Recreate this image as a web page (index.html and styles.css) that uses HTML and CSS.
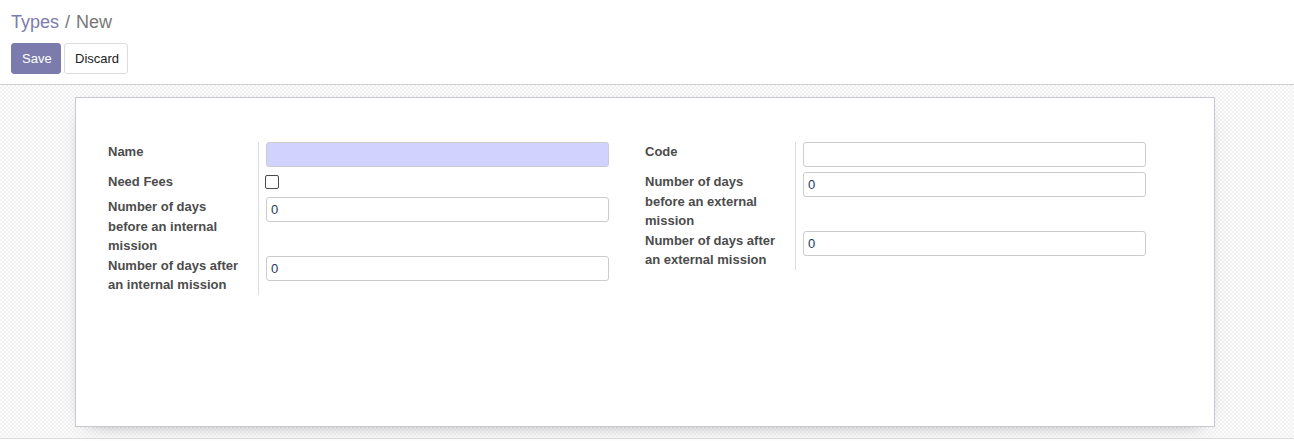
FILE: index.html
```html
<!DOCTYPE html>
<html>
<head>
<meta charset="utf-8">
<link rel="stylesheet" href="styles.css">
</head>
<body>
<div class="control-panel">
  <div class="breadcrumb"><a class="crumb-link">Types</a><span class="crumb-sep">/</span><span class="crumb-active">New</span></div>
  <div class="buttons">
    <button class="btn btn-primary">Save</button>
    <button class="btn btn-secondary">Discard</button>
  </div>
</div>
<div class="content">
  <div class="sheet">
    <div class="groups">
      <div class="group">
        <label class="label">Name</label>
        <div class="field"><input class="input required" type="text" value=""></div>
        <label class="label">Need Fees</label>
        <div class="field field-check"><span class="checkbox"></span></div>
        <label class="label">Number of days before an internal mission</label>
        <div class="field"><input class="input" type="text" value="0"></div>
        <label class="label">Number of days after an internal mission</label>
        <div class="field"><input class="input" type="text" value="0"></div>
      </div>
      <div class="group">
        <label class="label">Code</label>
        <div class="field"><input class="input" type="text" value=""></div>
        <label class="label">Number of days before an external mission</label>
        <div class="field"><input class="input" type="text" value="0"></div>
        <label class="label">Number of days after an external mission</label>
        <div class="field"><input class="input" type="text" value="0"></div>
      </div>
    </div>
  </div>
</div>
</body>
</html>
```
FILE: styles.css
```css
* { box-sizing: border-box; }
html, body { margin: 0; padding: 0; background: #fff; }
body {
  font-family: "Liberation Sans", Arial, sans-serif;
  font-size: 13px;
  color: #4c4c4c;
  width: 1294px;
  height: 441px;
  overflow: hidden;
}
.control-panel {
  height: 85px;
  border-bottom: 1px solid #cfcfcf;
  padding: 11px 0 0 11px;
}
.breadcrumb {
  font-size: 18px;
  line-height: 22px;
  height: 22px;
  color: #777;
}
.crumb-link { color: #7c7bad; }
.crumb-sep { margin: 0 6px; }
.buttons {
  display: flex;
  gap: 3px;
  margin-top: 10px;
}
.btn {
  font-family: "Liberation Sans", Arial, sans-serif;
  font-size: 13px;
  height: 31px;
  padding: 0 10px;
  border-radius: 3px;
  border: 1px solid #7c7bad;
  cursor: pointer;
}
.btn-primary {
  background: #7c7bad;
  color: #fff;
  width: 50px;
}
.btn-secondary {
  background: #fff;
  color: #222;
  border-color: #ddd;
  width: 64px;
}
.content {
  height: 354px;
  border-bottom: 1px solid #dcdcdc;
  background: repeating-conic-gradient(#f1f1f1 0 25%, #fcfcfc 0 50%) 0 0 / 4px 4px;
  padding-top: 12px;
  padding-left: 75px;
}
.sheet {
  width: 1140px;
  height: 330px;
  background: #fff;
  border: 1px solid #c8c8d3;
  box-shadow: 0 5px 20px -15px rgba(0, 0, 0, 0.8);
  padding: 44px 32px 0 32px;
}
.groups {
  display: flex;
}
.group {
  width: 50%;
  display: grid;
  grid-template-columns: 151px 1fr;
  align-content: start;
  padding-right: 36px;
}
.label {
  font-weight: bold;
  line-height: 19.5px;
  padding-right: 16px;
  border-right: 1px solid #ddd;
}
.field {
  padding-left: 7px;
}
.field-check {
  height: 25px;
  padding-top: 3px;
}
.input {
  display: block;
  width: 100%;
  height: 25px;
  margin: 0 0 5px 0;
  padding: 0 4px;
  border: 1px solid #ccc;
  border-radius: 3px;
  font-family: "Liberation Sans", Arial, sans-serif;
  font-size: 13px;
  color: #1e3a5c;
  background: #fff;
  outline: none;
}
.input.required { background: #d2d2ff; }
.checkbox {
  display: block;
  width: 14px;
  height: 14px;
  border: 1px solid #4a4a4a;
  border-radius: 2px;
  background: #fff;
  margin-left: -1px;
}
```
